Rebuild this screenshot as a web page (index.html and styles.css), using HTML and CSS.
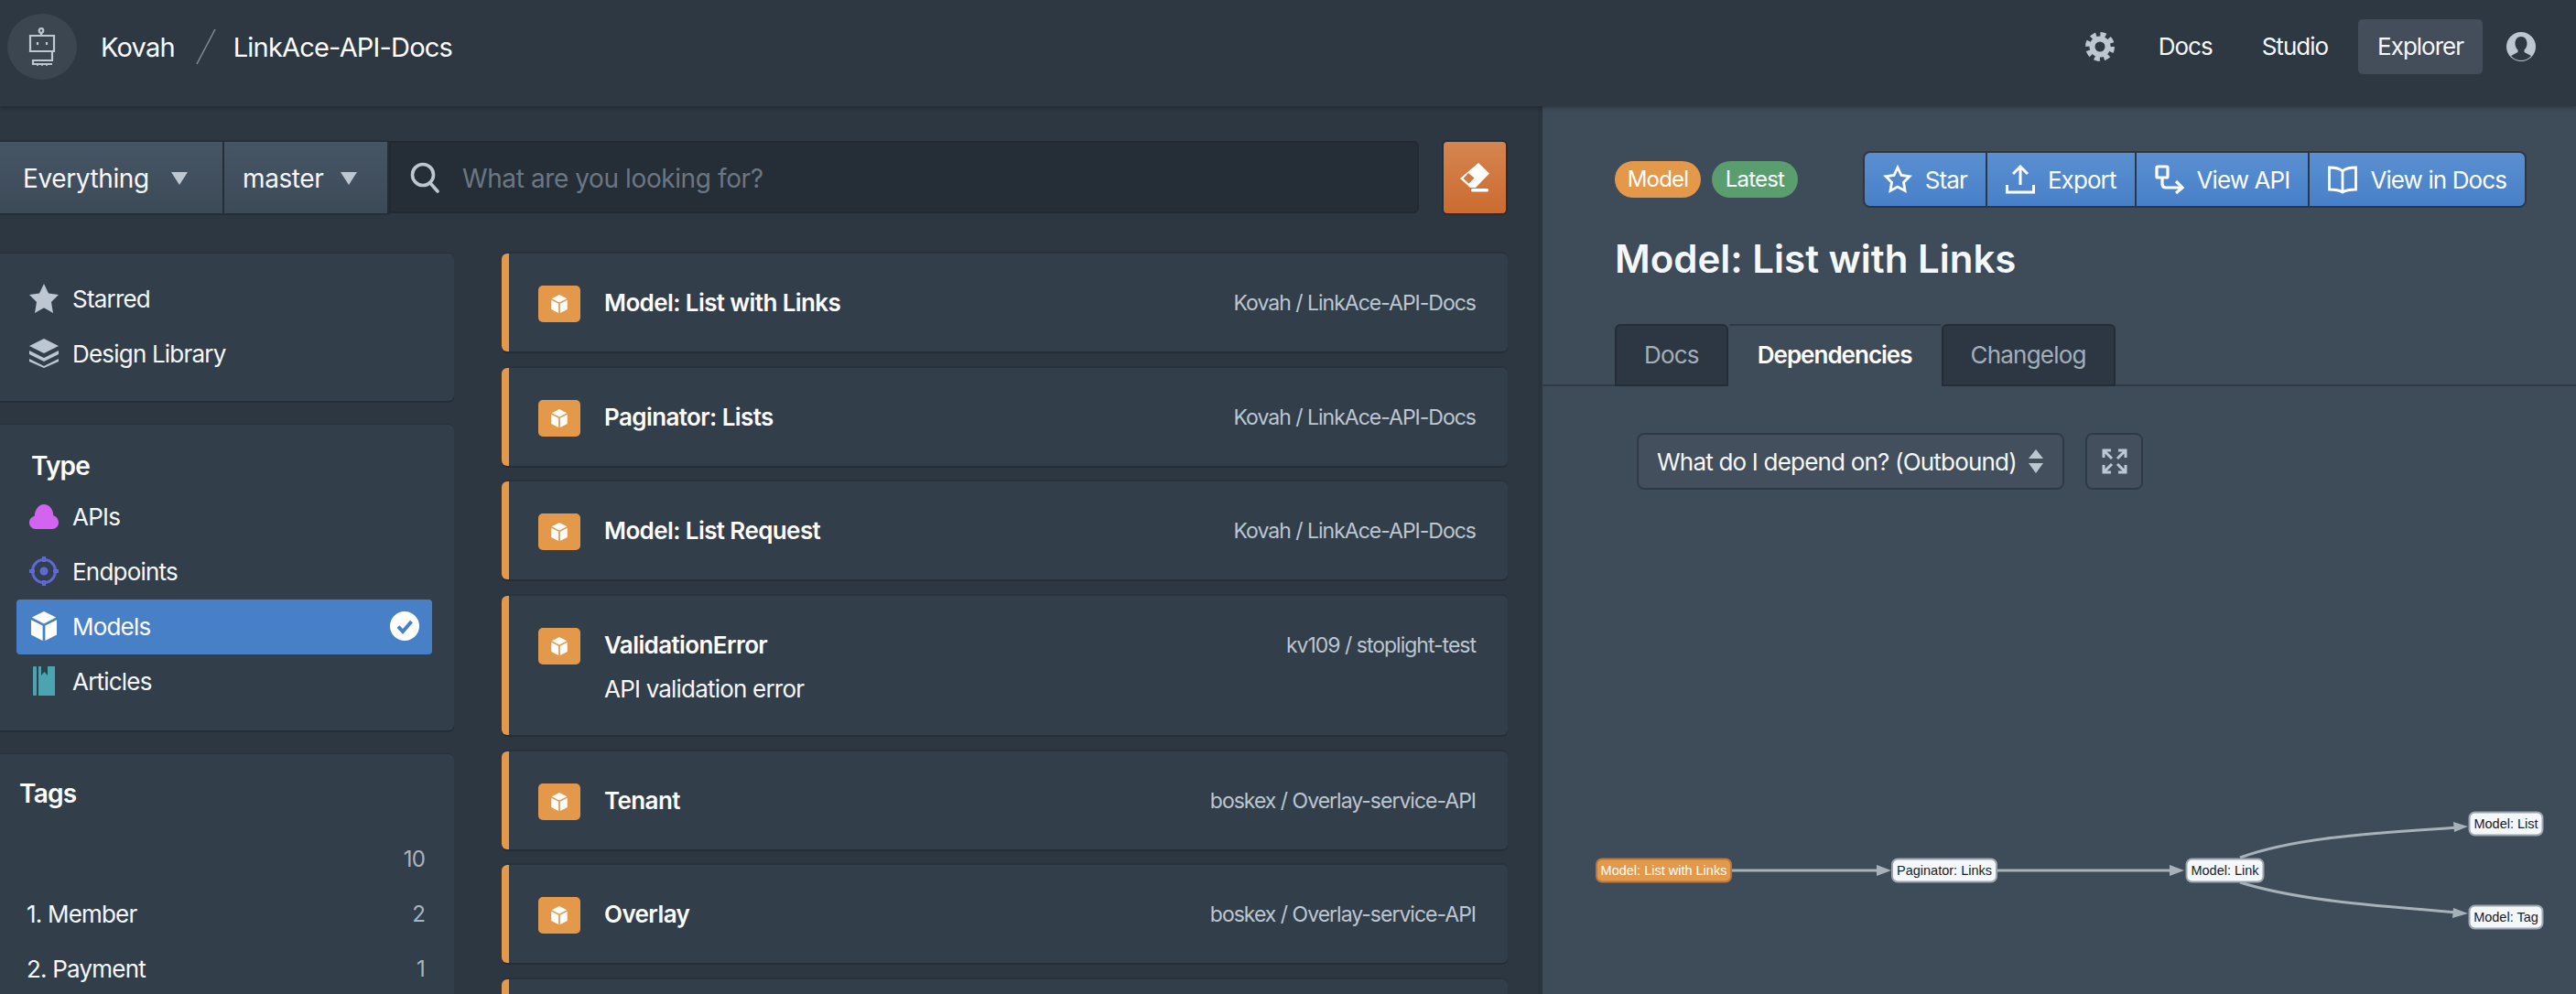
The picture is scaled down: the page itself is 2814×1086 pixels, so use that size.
FILE: index.html
```html
<!DOCTYPE html>
<html lang="en">
<head>
  <meta charset="UTF-8" />
  <title>LinkAce-API-Docs</title>
  <link rel="stylesheet" href="styles.css">
</head>
<body>
  <svg class="defs" width="0" height="0">
    <symbol id="cube" viewBox="0 0 16 16">
      <path d="M8 0l6.600 3.300L8 6.700 1.400 3.300z"/>
      <path d="M1 4.600l6.300 3.200V16L1 12.700z"/>
      <path d="M15 4.600L8.700 7.800V16l6.300-3.300z"/>
    </symbol>
  </svg>

  <header class="topbar">
    <div class="brand">
      <div class="logo">
        <svg width="30" height="42" viewBox="0 0 30 42" fill="none" stroke="#bcc7d1" stroke-width="2.200">
          <circle cx="14" cy="3.500" r="2.300"/>
          <path d="M14 6v3M2 9h26v17H2zM10 16v3M20 16v3"/>
          <path d="M26 26v10H5v4h21"/>
          <path d="M10 40v2M15 40v2M20 40v2" stroke-width="1.600"/>
        </svg>
      </div>
      <span class="crumb">Kovah</span>
      <svg class="slash" width="22" height="40" viewBox="0 0 22 40"><path d="M1 39L21 1" stroke="#7e8a96" stroke-width="1.600"/></svg>
      <span class="crumb">LinkAce-API-Docs</span>
    </div>
    <nav class="topnav">
      <svg class="gear" width="32" height="32" viewBox="0 0 32 32" fill="none" stroke="#bcc7d1">
        <circle cx="16" cy="16" r="8.500" stroke-width="6"/>
        <circle cx="16" cy="16" r="13.500" stroke-width="5" stroke-dasharray="6 4.600"/>
      </svg>
      <a class="nav-link">Docs</a>
      <a class="nav-link">Studio</a>
      <a class="nav-link active">Explorer</a>
      <svg class="avatar" width="32" height="32" viewBox="0 0 32 32">
        <circle cx="16" cy="16" r="16" fill="#bcc7d1"/>
        <path d="M16 5c-4 0-6.500 3-6.500 7.500 0 3 1.200 5.500 3 7v2.500L5 26c2.800 3.400 6.600 5 11 5s8.200-1.600 11-5l-7.500-4v-2.500c1.800-1.500 3-4 3-7C22.500 8 20 5 16 5z" fill="#2e3843"/>
      </svg>
    </nav>
  </header>

  <div class="layout">
    <section class="explorer">
      <div class="searchbar">
        <div class="scope wide">Everything<span class="caret"></span></div>
        <div class="scope">master<span class="caret"></span></div>
        <div class="search-input">
          <svg width="32" height="34" viewBox="0 0 32 34" fill="none" stroke="#bcc7d1" stroke-width="3.600">
            <circle cx="14" cy="14" r="11.500"/>
            <path d="M22 23l8 9" stroke-linecap="round"/>
          </svg>
          <span class="placeholder">What are you looking for?</span>
        </div>
        <button class="clear-btn">
          <svg width="32" height="32" viewBox="0 0 32 32" fill="#fff">
            <path fill-rule="evenodd" d="M20 0l12 11.500L17 27h-6L0 17zM9 11l-5.500 6 6 5.500 6-6z"/>
            <rect x="12" y="28" width="19" height="3.500" rx="1.500"/>
          </svg>
        </button>
      </div>

      <div class="columns">
        <aside class="sidebar">
          <div class="panel">
            <div class="row">
              <svg class="row-icon" viewBox="0 0 32 32" fill="#bcc7d1"><path d="M16 0l5 10.500 11 1.500-8 8 2 12-10-5.700L6 32l2-12-8-8 11-1.500z"/></svg>
              Starred
            </div>
            <div class="row">
              <svg class="row-icon" viewBox="0 0 32 32" fill="#bcc7d1">
                <path d="M16 0l16 8-16 8L0 8z"/>
                <path d="M0 13l16 8 16-8v4l-16 8-16-8z"/>
                <path d="M0 22l16 8 16-8v3l-16 7-16-7z"/>
              </svg>
              Design Library
            </div>
          </div>

          <div class="panel type-panel">
            <h3 class="panel-title">Type</h3>
            <div class="row">
              <svg class="row-icon" viewBox="0 0 32 32" fill="#d264f0"><path d="M7 30c-4 0-7-3-7-7 0-3.500 2.400-6.300 5.700-6.900C6 9 10.300 3 16 3c5.800 0 10 5 10.300 12.200 3.300.9 5.700 4 5.700 7.800 0 4-3 7-7 7z"/></svg>
              APIs
            </div>
            <div class="row">
              <svg class="row-icon" viewBox="0 0 32 32" fill="none" stroke="#5f68d6" stroke-width="3">
                <circle cx="16" cy="16" r="12.500"/>
                <circle cx="16" cy="16" r="4.500" fill="#5f68d6" stroke="none"/>
                <path d="M16 0v6M16 26v6M0 16h6M26 16h6" stroke-width="4"/>
              </svg>
              Endpoints
            </div>
            <div class="row selected">
              <svg class="row-icon" viewBox="0 0 16 16" fill="#fff"><use href="#cube"/></svg>
              Models
              <svg class="check" width="32" height="32" viewBox="0 0 32 32">
                <circle cx="16" cy="16" r="16" fill="#fff"/>
                <path d="M9 16.500l5 5.500 9.500-11" fill="none" stroke="#4880c8" stroke-width="4"/>
              </svg>
            </div>
            <div class="row">
              <svg class="row-icon" viewBox="0 0 32 32" fill="#4aa5b0">
                <rect x="4" y="0" width="4" height="32" rx="1"/>
                <path d="M10 0h3v10l3.500-4 3.500 4V0h8v32H10z"/>
              </svg>
              Articles
            </div>
          </div>

          <div class="panel">
            <h3 class="panel-title tags-title">Tags</h3>
            <div class="tag-row"><span></span><span class="count">10</span></div>
            <div class="tag-row"><span>1. Member</span><span class="count">2</span></div>
            <div class="tag-row"><span>2. Payment</span><span class="count">1</span></div>
          </div>
        </aside>

        <main class="results">
          <article class="card">
            <svg class="node-icon" viewBox="0 0 46 40"><rect width="46" height="40" rx="5" fill="#e3984a"/><svg x="13" y="10" width="20" height="20" fill="#fff"><use href="#cube"/></svg></svg>
            <div class="card-body"><h4>Model: List with Links</h4></div>
            <span class="project">Kovah / LinkAce-API-Docs</span>
          </article>
          <article class="card">
            <svg class="node-icon" viewBox="0 0 46 40"><rect width="46" height="40" rx="5" fill="#e3984a"/><svg x="13" y="10" width="20" height="20" fill="#fff"><use href="#cube"/></svg></svg>
            <div class="card-body"><h4>Paginator: Lists</h4></div>
            <span class="project">Kovah / LinkAce-API-Docs</span>
          </article>
          <article class="card">
            <svg class="node-icon" viewBox="0 0 46 40"><rect width="46" height="40" rx="5" fill="#e3984a"/><svg x="13" y="10" width="20" height="20" fill="#fff"><use href="#cube"/></svg></svg>
            <div class="card-body"><h4>Model: List Request</h4></div>
            <span class="project">Kovah / LinkAce-API-Docs</span>
          </article>
          <article class="card tall">
            <svg class="node-icon" viewBox="0 0 46 40"><rect width="46" height="40" rx="5" fill="#e3984a"/><svg x="13" y="10" width="20" height="20" fill="#fff"><use href="#cube"/></svg></svg>
            <div class="card-body"><h4>ValidationError</h4><p>API validation error</p></div>
            <span class="project">kv109 / stoplight-test</span>
          </article>
          <article class="card">
            <svg class="node-icon" viewBox="0 0 46 40"><rect width="46" height="40" rx="5" fill="#e3984a"/><svg x="13" y="10" width="20" height="20" fill="#fff"><use href="#cube"/></svg></svg>
            <div class="card-body"><h4>Tenant</h4></div>
            <span class="project">boskex / Overlay-service-API</span>
          </article>
          <article class="card">
            <svg class="node-icon" viewBox="0 0 46 40"><rect width="46" height="40" rx="5" fill="#e3984a"/><svg x="13" y="10" width="20" height="20" fill="#fff"><use href="#cube"/></svg></svg>
            <div class="card-body"><h4>Overlay</h4></div>
            <span class="project">boskex / Overlay-service-API</span>
          </article>
          <article class="card"></article>
        </main>
      </div>
    </section>

    <section class="detail">
      <div class="detail-head">
        <div class="badges">
          <span class="badge orange">Model</span>
          <span class="badge green">Latest</span>
        </div>
        <div class="btn-group">
          <a class="btn">
            <svg width="32" height="32" viewBox="0 0 32 32" fill="none" stroke="#fff" stroke-width="2.800"><path d="M16 3l4 8.500 9 1.300-6.500 6.500 1.500 9.200-8-4.400-8 4.400 1.500-9.200L3 12.800l9-1.300z"/></svg>
            Star
          </a>
          <a class="btn">
            <svg width="32" height="32" viewBox="0 0 32 32" fill="none" stroke="#fff" stroke-width="3"><path d="M16 22V3M8 10l8-8 8 8M1.500 22v8h29v-8"/></svg>
            Export
          </a>
          <a class="btn">
            <svg width="32" height="32" viewBox="0 0 32 32" fill="none" stroke="#fff" stroke-width="3.200"><rect x="2" y="2" width="12" height="12" rx="1"/><path d="M8 14v7c0 3 2 4 4 4h17M23 18l7 7-7 6"/></svg>
            View API
          </a>
          <a class="btn">
            <svg width="32" height="32" viewBox="0 0 32 32" fill="none" stroke="#fff" stroke-width="2.800"><path d="M16 7C13 4 7 3 1.500 3v24C7 27 12 27.500 16 30c4-2.500 9-3 14.500-3V3C25 3 19 4 16 7zM16 7v22"/></svg>
            View in Docs
          </a>
        </div>
      </div>
      <h1 class="detail-title">Model: List with Links</h1>
      <div class="tabs">
        <a class="tab">Docs</a>
        <a class="tab current">Dependencies</a>
        <a class="tab">Changelog</a>
      </div>
      <div class="graph-tools">
        <div class="direction">
          What do I depend on? (Outbound)
          <svg width="16" height="26" viewBox="0 0 16 26" fill="#bcc7d1"><path d="M8 0l8 10H0zM0 15h16L8 26z"/></svg>
        </div>
        <div class="expand">
          <svg width="28" height="28" viewBox="0 0 28 28" fill="none" stroke="#bcc7d1" stroke-width="3">
            <path d="M2 10V2h8M2 2l9 9M18 2h8v8M26 2l-9 9M2 18v8h8M2 26l9-9M26 18v8h-8M26 26l-9-9"/>
          </svg>
        </div>
      </div>
      <svg class="graph" width="1129" height="200" viewBox="1685 860 1129 200">
        <g fill="none" stroke="#a7b1b9" stroke-width="3">
          <path d="M1891 951H2056"/>
          <path d="M2181 951H2376"/>
          <path d="M2447 937C2510 914 2600 910 2686 904"/>
          <path d="M2447 964C2510 984 2600 990 2686 997"/>
        </g>
        <g fill="#a7b1b9">
          <path d="M2066 951l-16-6v12z"/>
          <path d="M2386 951l-16-6v12z"/>
          <path d="M2696 903l-16-5 1 11z"/>
          <path d="M2696 998l-16-6-1 11z"/>
        </g>
        <g class="g-node origin">
          <rect x="1744" y="938.500" width="147" height="25" rx="6"/>
          <text x="1817.500" y="956">Model: List with Links</text>
        </g>
        <g class="g-node">
          <rect x="2067" y="938.500" width="114" height="25" rx="6"/>
          <text x="2124" y="956">Paginator: Links</text>
        </g>
        <g class="g-node">
          <rect x="2388.500" y="938.500" width="84" height="25" rx="6"/>
          <text x="2430.500" y="956">Model: Link</text>
        </g>
        <g class="g-node">
          <rect x="2697.500" y="887.500" width="80" height="25" rx="6"/>
          <text x="2737.500" y="905">Model: List</text>
        </g>
        <g class="g-node">
          <rect x="2697.500" y="989.500" width="80" height="25" rx="6"/>
          <text x="2737.500" y="1007">Model: Tag</text>
        </g>
      </svg>
    </section>
  </div>
</body>
</html>
```

FILE: styles.css
```css
* {
  box-sizing: border-box;
}
html, body {
  margin: 0;
  height: 100%;
}
body {
  font-family: Inter, "Noto Sans", sans-serif;
  font-size: 26px;
  letter-spacing: -0.8px;
  color: #f5f8fa;
  background: #2d3741;
  display: flex;
  flex-direction: column;
  overflow: hidden;
}
.defs {
  position: absolute;
}

/* top bar */
.topbar {
  height: 116px;
  flex: none;
  display: flex;
  justify-content: space-between;
  align-items: center;
  padding: 0 44px 14px 8px;
  background: #2e3843;
  box-shadow: 0 2px 4px rgba(0, 0, 0, 0.25);
  position: relative;
  z-index: 2;
}
.brand {
  display: flex;
  align-items: center;
}
.logo {
  width: 76px;
  height: 72px;
  border-radius: 50%;
  background: #3b4651;
  display: flex;
  justify-content: center;
  align-items: center;
  margin-right: 26px;
}
.crumb {
  font-size: 29px;
  color: #fff;
}
.slash {
  margin: 0 19px 0 23px;
}
.topnav {
  display: flex;
  align-items: center;
}
.gear {
  margin-right: 27px;
}
.nav-link {
  padding: 0 21px;
  height: 60px;
  line-height: 60px;
  border-radius: 5px;
  margin-right: 12px;
  letter-spacing: -1px;
}
.nav-link.active {
  background: #434e5a;
  margin-left: 0;
  margin-right: 26px;
}

/* layout */
.layout {
  flex: 1;
  display: flex;
  min-height: 0;
  overflow: hidden;
}
.explorer {
  width: 1685px;
  flex: none;
  padding: 37px 33px 0 0;
  border-right: 5px solid #2a343e;
}
.searchbar {
  display: flex;
  align-items: stretch;
  height: 82px;
}
.scope {
  width: 180px;
  display: flex;
  align-items: center;
  justify-content: space-between;
  padding: 2px 33px 0 20px;
  background: linear-gradient(#465564, #3c4a58);
  border: 1px solid #252d37;
  border-width: 2px 2px 2px 0;
  font-size: 28px;
  letter-spacing: -0.4px;
}
.scope.wide {
  width: 245px;
  padding-left: 25px;
  padding-right: 38px;
}
.caret {
  width: 0;
  height: 0;
  border-left: 9px solid transparent;
  border-right: 9px solid transparent;
  border-top: 14px solid #bcc7d1;
}
.search-input {
  flex: 1;
  margin: 1px 0 2px;
  display: flex;
  align-items: center;
  gap: 25px;
  padding-left: 23px;
  background: #252d37;
  border-radius: 0 6px 6px 0;
  box-shadow: inset 0 0 0 2px #222932;
}
.placeholder {
  color: #6b7783;
  font-size: 28px;
  letter-spacing: -0.4px;
  padding-top: 2px;
}
.clear-btn {
  width: 72px;
  margin-left: 25px;
  border: 2px solid #252d37;
  border-radius: 6px;
  padding: 0;
  background: linear-gradient(#d5854f, #cb6b30);
  display: flex;
  justify-content: center;
  align-items: center;
}

.columns {
  display: flex;
  margin-top: 42px;
  gap: 52px;
}
.sidebar {
  width: 516px;
  margin-left: -20px;
  flex: none;
  display: flex;
  flex-direction: column;
  gap: 26px;
}
.panel {
  background: #333e4b;
  padding: 20px 24px 21px 38px;
  border-radius: 6px;
  box-shadow: 0 2px 0 #252d37, 0 -1px 0 #29323c;
}
.type-panel {
  padding-bottom: 23px;
}
.panel-title {
  margin: 0;
  height: 51px;
  line-height: 50px;
  padding-left: 16px;
  font-size: 28px;
  font-weight: 600;
  color: #fff;
}
.tags-title {
  padding-left: 3px;
  height: 64px;
  line-height: 46px;
}
.row {
  height: 60px;
  display: flex;
  align-items: center;
  gap: 15px;
  padding: 0 14px 2px;
  border-radius: 4px;
}
.row-icon {
  width: 32px;
  height: 32px;
  flex: none;
}
.row.selected {
  background: #4880c8;
  color: #fff;
}
.check {
  margin-left: auto;
}
.tag-row {
  height: 60px;
  display: flex;
  justify-content: space-between;
  align-items: center;
  padding: 0 8px 0 11px;
}
.count {
  color: #a8b4bf;
  font-size: 24px;
}

.results {
  flex: 1;
  min-width: 0;
}
.card {
  height: 107px;
  margin-bottom: 17.5px;
  display: flex;
  align-items: flex-start;
  padding: 35px 35px 0 32px;
  background: #333e4b;
  border-left: 8px solid #e3984a;
  border-radius: 6px;
  box-shadow: 0 2px 0 #252d37, 0 -2px 0 #29323c;
}
.card.tall {
  height: 152.5px;
}
.node-icon {
  width: 46px;
  height: 40px;
  flex: none;
}
.card-body {
  flex: 1;
  margin-left: 26px;
}
.card-body h4 {
  margin: 0;
  font-size: 26px;
  font-weight: 600;
  letter-spacing: -0.6px;
  line-height: 37px;
  color: #fff;
}
.card-body p {
  margin: 11px 0 0;
  line-height: 38px;
}
.project {
  font-size: 23px;
  letter-spacing: -1px;
  line-height: 38px;
  color: #bcc7d1;
}

/* right side */
.detail {
  flex: 1;
  background: #3e4b59;
  min-width: 0;
}
.detail-head {
  display: flex;
  justify-content: space-between;
  align-items: center;
  padding: 49px 54px 0 79px;
}
.badges {
  display: flex;
  gap: 12px;
}
.badge {
  width: 94px;
  height: 40px;
  border-radius: 20px;
  line-height: 40px;
  text-align: center;
  font-size: 24px;
  color: #fff;
}
.badge.orange {
  background: #e3984a;
}
.badge.green {
  background: #5a9e6f;
}
.btn-group {
  display: flex;
  border: 2px solid #2d3741;
  border-radius: 8px;
  overflow: hidden;
}
.btn {
  height: 58px;
  display: flex;
  align-items: center;
  gap: 14px;
  padding: 0 20px;
  background: linear-gradient(#5a8fd1, #4880c8);
  font-size: 26px;
  letter-spacing: -0.9px;
  color: #fff;
  border-left: 2px solid #2d3741;
}
.btn:first-child {
  border-left: 0;
}
.detail-title {
  margin: 32px 0 0 79px;
  font-size: 42px;
  letter-spacing: 0;
  line-height: 48px;
  font-weight: 600;
  color: #f5f8fa;
}
.tabs {
  display: flex;
  margin-top: 47px;
  padding-left: 79px;
  height: 68px;
  border-bottom: 2px solid #2f3a46;
}
.tab {
  height: 68px;
  line-height: 64px;
  padding: 0 30px;
  color: #a3afba;
  background: #2c3743;
  border: 2px solid #252d37;
  border-radius: 6px 6px 0 0;
}
.tab.current {
  font-weight: 600;
  letter-spacing: -1px;
  color: #fff;
  background: #3e4b59;
  border-color: #2f3a46 transparent #3e4b59;
  border-radius: 0;
}
.graph-tools {
  display: flex;
  margin: 51px 0 0 103px;
  gap: 23px;
}
.direction, .expand {
  height: 62px;
  display: flex;
  align-items: center;
  background: #434f5c;
  border: 2px solid #2f3a46;
  border-radius: 8px;
}
.direction {
  width: 467px;
  justify-content: space-between;
  padding: 0 21px 0 20px;
  white-space: nowrap;
}
.expand {
  width: 63px;
  justify-content: center;
}
.graph {
  display: block;
  margin-top: 325px;
}
.g-node rect {
  fill: #f5f8fa;
  stroke: #9aa5ad;
  stroke-width: 2;
}
.g-node text {
  font-family: "Liberation Sans", Arial, sans-serif;
  font-size: 14.5px;
  letter-spacing: 0;
  fill: #182026;
  text-anchor: middle;
}
.g-node.origin rect {
  fill: #e3984a;
  stroke: #b9773a;
}
.g-node.origin text {
  fill: #fff;
}
```
